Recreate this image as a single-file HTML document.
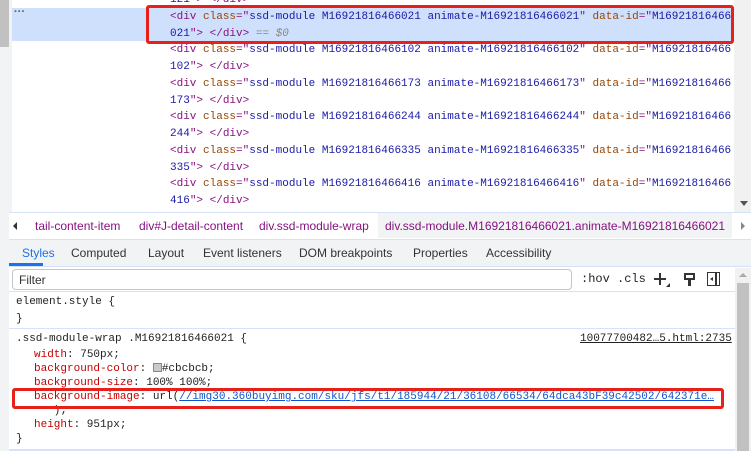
<!DOCTYPE html>
<html><head><style>
*{margin:0;padding:0;box-sizing:border-box}
body{width:751px;height:451px;overflow:hidden;background:#fff;font-family:"Liberation Sans",sans-serif;position:relative}
.mono{font-family:"Liberation Mono",monospace;font-size:11px;white-space:pre}
.t{color:#881280}.a{color:#994500}.v{color:#1a1aa6}
.dom{position:absolute;left:170px;top:-8px;line-height:16.75px}
.abs{position:absolute}
.css .n{color:#c80000}.css{color:#222}
</style></head><body>
<div class="abs" style="left:0;top:0;width:12px;height:212px;background:#f1f3f4"></div>
<div class="abs" style="left:0;top:0;width:9px;height:47px;background:#c1c1c1"></div>
<div class="abs" style="left:12px;top:8px;width:722px;height:33px;background:#cfe0fc"></div>
<div class="abs" style="left:14px;top:6px;color:#555;font-size:11px;font-weight:bold">···</div>
<div class="mono dom"><span class="v">121"</span><span class="t">&gt; &lt;/div&gt;</span>
<span class="t">&lt;div</span> <span class="a">class</span><span class="t">="</span><span class="v">ssd-module M16921816466021 animate-M16921816466021</span><span class="t">"</span> <span class="a">data-id</span><span class="t">="</span><span class="v">M16921816466</span>
<span class="v">021</span><span class="t">"&gt; &lt;/div&gt;</span> <span style="color:#888">== <i>$0</i></span>
<span class="t">&lt;div</span> <span class="a">class</span><span class="t">="</span><span class="v">ssd-module M16921816466102 animate-M16921816466102</span><span class="t">"</span> <span class="a">data-id</span><span class="t">="</span><span class="v">M16921816466</span>
<span class="v">102</span><span class="t">"&gt; &lt;/div&gt;</span>
<span class="t">&lt;div</span> <span class="a">class</span><span class="t">="</span><span class="v">ssd-module M16921816466173 animate-M16921816466173</span><span class="t">"</span> <span class="a">data-id</span><span class="t">="</span><span class="v">M16921816466</span>
<span class="v">173</span><span class="t">"&gt; &lt;/div&gt;</span>
<span class="t">&lt;div</span> <span class="a">class</span><span class="t">="</span><span class="v">ssd-module M16921816466244 animate-M16921816466244</span><span class="t">"</span> <span class="a">data-id</span><span class="t">="</span><span class="v">M16921816466</span>
<span class="v">244</span><span class="t">"&gt; &lt;/div&gt;</span>
<span class="t">&lt;div</span> <span class="a">class</span><span class="t">="</span><span class="v">ssd-module M16921816466335 animate-M16921816466335</span><span class="t">"</span> <span class="a">data-id</span><span class="t">="</span><span class="v">M16921816466</span>
<span class="v">335</span><span class="t">"&gt; &lt;/div&gt;</span>
<span class="t">&lt;div</span> <span class="a">class</span><span class="t">="</span><span class="v">ssd-module M16921816466416 animate-M16921816466416</span><span class="t">"</span> <span class="a">data-id</span><span class="t">="</span><span class="v">M16921816466</span>
<span class="v">416</span><span class="t">"&gt; &lt;/div&gt;</span></div>
<div class="abs" style="left:146px;top:5px;width:588px;height:39px;border:3px solid #e8201a;border-radius:3px"></div>
<div class="abs" style="left:734px;top:0;width:17px;height:212px;background:#f1f1f1"></div>
<div class="abs" style="left:740px;top:201px;width:0;height:0;border-left:4px solid transparent;border-right:4px solid transparent;border-top:5px solid #555"></div>
<!-- breadcrumb -->
<div class="abs" style="left:0;top:212px;width:751px;height:27px;background:#fff;border-top:1px solid #d6e2fb"></div>
<div class="abs" style="left:0;top:212px;width:9px;height:27px;background:#f1f3f4"></div>
<div class="abs" style="left:13px;top:222px;border-top:4px solid transparent;border-bottom:4px solid transparent;border-right:4px solid #333"></div>
<div class="abs" style="left:741px;top:222px;border-top:4px solid transparent;border-bottom:4px solid transparent;border-left:4px solid #888"></div>
<div class="abs" style="left:378px;top:213px;width:354px;height:25px;background:#f1f3f4"></div>
<div class="abs" style="top:219px;font-size:12px;color:#881280;white-space:nowrap;left:35px">tail-content-item</div>
<div class="abs" style="top:219px;font-size:12px;color:#881280;white-space:nowrap;left:139px">div#J-detail-content</div>
<div class="abs" style="top:219px;font-size:12px;color:#881280;white-space:nowrap;left:259px">div.ssd-module-wrap</div>
<div class="abs" style="left:385px;top:219px;font-size:12px;color:#881280;white-space:nowrap">div.ssd-module.M16921816466021.animate-M16921816466021</div>
<!-- tabs -->
<div class="abs" style="left:0;top:239px;width:751px;height:28px;background:#f1f3f4;border-top:1px solid #d6e2fb;border-bottom:1px solid #d6e2fb"></div>
<div class="abs" style="left:0;top:239px;width:9px;height:212px;background:#f1f3f4"></div>
<div class="abs" style="left:22px;top:246px;font-size:12px;color:#1a73e8">Styles</div>
<div class="abs" style="left:9px;top:263px;width:34px;height:3px;background:#1a73e8"></div>
<div class="abs" style="left:71px;top:246px;font-size:12px;color:#333;white-space:nowrap;width:600px;height:15px"><span style="position:absolute;left:0">Computed</span><span style="position:absolute;left:77px">Layout</span><span style="position:absolute;left:132px">Event listeners</span><span style="position:absolute;left:228px">DOM breakpoints</span><span style="position:absolute;left:342px">Properties</span><span style="position:absolute;left:415px">Accessibility</span></div>
<!-- filter -->
<div class="abs" style="left:9px;top:267px;width:742px;height:25px;background:#fff;border-bottom:1px solid #d6e2fb"></div>
<div class="abs" style="left:12px;top:269px;width:560px;height:21px;border:1px solid #c4c7c5;border-radius:4px;font-size:12px;color:#333;padding:3px 0 0 6px">Filter</div>
<div class="abs mono" style="left:581px;top:272px;color:#222;font-size:12px">:hov</div>
<div class="abs mono" style="left:617px;top:272px;color:#222;font-size:12px">.cls</div>
<div class="abs" style="left:654px;top:278px;width:12px;height:1.5px;background:#333"></div>
<div class="abs" style="left:659px;top:273px;width:1.5px;height:12px;background:#333"></div>
<div class="abs" style="left:666px;top:283px;border-left:4px solid transparent;border-bottom:4px solid #333"></div>
<div class="abs" style="left:684px;top:273px;width:11px;height:7px;border:2px solid #333;background:#fff"></div>
<div class="abs" style="left:688px;top:280px;width:3px;height:6px;background:#333"></div>
<div class="abs" style="left:707px;top:272px;width:13px;height:14px;border:1.5px solid #333"></div>
<div class="abs" style="left:715px;top:272px;width:1.5px;height:14px;background:#333"></div>
<div class="abs" style="left:710px;top:277px;border-top:2.5px solid transparent;border-bottom:2.5px solid transparent;border-right:3px solid #333"></div>
<!-- styles scrollbar -->
<div class="abs" style="left:735px;top:268px;width:16px;height:183px;background:#f1f1f1"></div>
<div class="abs" style="left:739px;top:273px;border-left:4px solid transparent;border-right:4px solid transparent;border-bottom:4px solid #aaa"></div>
<div class="abs" style="left:737px;top:283px;width:12px;height:168px;background:#c1c1c1"></div>
<!-- styles -->
<div class="abs mono css" style="left:16px;top:294px;line-height:16.5px">element.style {
}</div>
<div class="abs" style="left:9px;top:328px;width:726px;height:1px;background:#d6e2fb"></div>
<div class="abs mono css" style="left:16px;top:332px;line-height:14px">.ssd-module-wrap .M16921816466021 {</div>
<div class="abs mono css" style="left:34px;top:348px;line-height:14px"><span class="n">width</span>: 750px;
<span class="n">background-color</span>: <span style="display:inline-block;width:9px;height:9px;background:#cbcbcb;border:1px solid #888;vertical-align:-1px"></span>#cbcbcb;
<span class="n">background-size</span>: 100% 100%;
<span class="n">background-image</span>: url(<span style="text-decoration:underline;color:#1155cc">//img30.360buyimg.com/sku/jfs/t1/185944/21/36108/66534/64dca43bF39c42502/642371e…</span>
   );
<span class="n">height</span>: 951px;</div>
<div class="abs mono css" style="left:16px;top:432px;line-height:14px">}</div>
<div class="abs mono" style="left:580px;top:332px;color:#222;text-decoration:underline;line-height:14px">10077700482…5.html:2735</div>
<div class="abs" style="left:12px;top:388px;width:712px;height:21px;border:3px solid #e8201a;border-radius:3px"></div>
<div class="abs" style="left:9px;top:449px;width:726px;height:2px;background:#d6e2fb"></div>
</body></html>
